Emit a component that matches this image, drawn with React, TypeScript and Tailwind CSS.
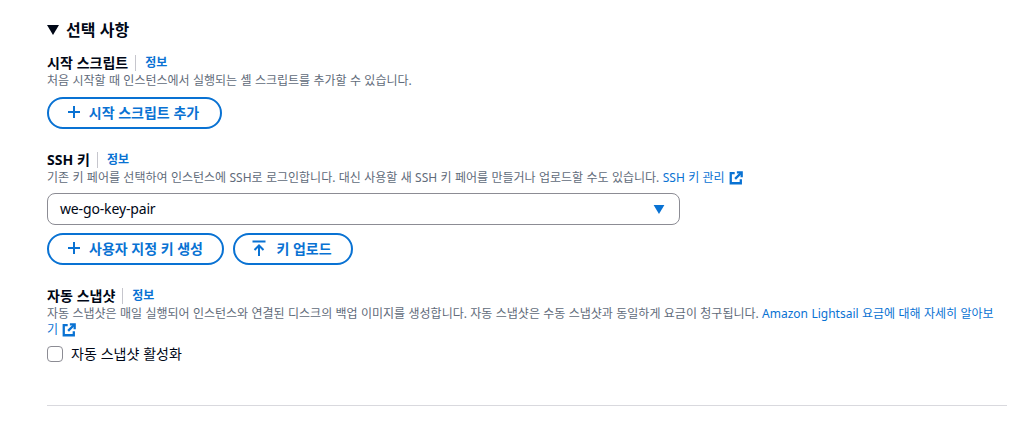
const FONT = "font-['Noto_Sans','Noto_Sans_CJK_KR',sans-serif]"

function ExternalIcon() {
  return (
    <svg viewBox="0 0 16 16" className="inline-block w-[14px] h-[14px] align-[-3px] ml-[4px]" fill="none" stroke="#0972d3" strokeWidth="2.6">
      <path d="M6.5 2.5H2v11.5h11.5V9.5" />
      <path d="M9 1.5h5.5V7" />
      <path d="M14 2 7 9" />
    </svg>
  )
}

function PlusIcon() {
  return (
    <svg viewBox="0 0 16 16" className="w-[16px] h-[16px]" fill="none" stroke="#0972d3" strokeWidth="2">
      <path d="M8 2v12M2 8h12" />
    </svg>
  )
}

function UploadIcon() {
  return (
    <svg viewBox="0 0 16 16" className="w-[16px] h-[18px]" fill="none" stroke="#0972d3" strokeWidth="2">
      <path d="M1.5 1.5h13M8 16V5.5M3.5 10 8 5.5l4.5 4.5" />
    </svg>
  )
}

function OutlineButton({ icon, label, className }: { icon: React.ReactNode; label: string; className: string }) {
  return (
    <button className={`h-[32px] rounded-[16px] border-2 border-[#0972d3] flex items-center justify-center pb-[2px] text-[#0972d3] text-[14px] font-bold ${className}`}>
      {icon}
      <span>{label}</span>
    </button>
  )
}

function FieldLabel({ text }: { text: string }) {
  return (
    <div className="flex items-center h-[20px]">
      <span className="text-[14px] leading-[20px] font-bold text-[#000716]">{text}</span>
      <span className="ml-[7px] mr-[9px] h-[16px] w-px bg-[#c6c6cd]" />
      <a className="text-[12px] leading-[20px] font-bold text-[#0972d3]">정보</a>
    </div>
  )
}

export default function App() {
  return (
    <div className={`${FONT} w-[1036px] h-[428px] bg-white overflow-hidden pl-[47px] pr-[29px] pt-[19px] [word-spacing:0.25px]`}>
      <div className="flex items-center h-[22px]">
        <svg viewBox="0 0 12 10" className="w-[12px] h-[10px] mr-[7px]"><path d="M0 0h12L6 10z" fill="#000716" /></svg>
        <h2 className="text-[16px] leading-[22px] font-bold text-[#000716]">선택 사항</h2>
      </div>

      <div className="mt-[12px]">
        <FieldLabel text="시작 스크립트" />
        <p className="text-[12px] leading-[16px] text-[#5f6b7a]">처음 시작할 때 인스턴스에서 실행되는 셸 스크립트를 추가할 수 있습니다.</p>
        <OutlineButton className="mt-[8px] w-[175px] gap-[7px] pr-[4px]" icon={<PlusIcon />} label="시작 스크립트 추가" />
      </div>

      <div className="mt-[21px]">
        <FieldLabel text="SSH 키" />
        <p className="text-[12px] leading-[16px] text-[#5f6b7a]">
          기존 키 페어를 선택하여 인스턴스에 SSH로 로그인합니다. 대신 사용할 새 SSH 키 페어를 만들거나 업로드할 수도 있습니다.{' '}
          <a className="text-[#0972d3]">SSH 키 관리<ExternalIcon /></a>
        </p>
        <div className="mt-[7px] w-[633px] h-[32px] rounded-[8px] border border-[#8c8c94] flex items-center justify-between pl-[12px] pr-[14px]">
          <span className="mb-[2px] text-[14px] text-[#000716] tracking-[-0.15px]">we-go-key-pair</span>
          <svg viewBox="0 0 12 10" className="w-[12px] h-[9px]"><path d="M0 0h12L6 10z" fill="#0972d3" /></svg>
        </div>
        <div className="mt-[8px] flex gap-[9px]">
          <OutlineButton className="w-[177px] gap-[7px] pr-[2px]" icon={<PlusIcon />} label="사용자 지정 키 생성" />
          <OutlineButton className="w-[120px] gap-[9px] pr-[3px]" icon={<UploadIcon />} label="키 업로드" />
        </div>
      </div>

      <div className="mt-[21px]">
        <FieldLabel text="자동 스냅샷" />
        <p className="w-[950px] text-[12px] leading-[16px] text-[#5f6b7a]">
          자동 스냅샷은 매일 실행되어 인스턴스와 연결된 디스크의 백업 이미지를 생성합니다. 자동 스냅샷은 수동 스냅샷과 동일하게 요금이 청구됩니다.{' '}
          <a className="text-[#0972d3]">Amazon Lightsail 요금에 대해 자세히 알아보기<ExternalIcon /></a>
        </p>
        <label className="mt-[6px] flex items-center h-[20px]">
          <span className="w-[16px] h-[16px] rounded-[4px] border border-[#8c8c94] bg-white" />
          <span className="mb-[2px] ml-[8px] text-[14px] text-[#000716]">자동 스냅샷 활성화</span>
        </label>
      </div>

      <div className="mt-[41px] h-px bg-[#d9d9de]" />
    </div>
  )
}
